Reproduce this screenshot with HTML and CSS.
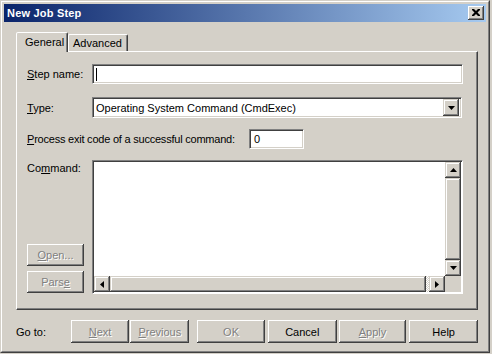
FILE: index.html
```html
<!DOCTYPE html>
<html lang="en">
<head>
  <meta charset="UTF-8">
  <title>New Job Step</title>
  <link rel="stylesheet" href="styles.css">
</head>
<body>
  <div class="window">
    <div class="frame">
      <div class="titlebar">
        <span class="title">New Job Step</span>
        <div class="close">
          <svg width="8" height="7" viewBox="0 0 8 7"><path d="M0 0h2l2 2 2-2h2v1l-2.5 2.5L8 6v1H6L4 5 2 7H0V6l2.5-2.5L0 1z" fill="#000"/></svg>
        </div>
      </div>

      <div class="content">
        <!-- Tabs -->
        <div class="tabs">
          <div class="tab active">General</div>
          <div class="tab">Advanced</div>
        </div>

        <div class="panel">
          <div class="row">
            <label class="label"><u>S</u>tep name:</label>
            <div class="field step-name"><span class="caret"></span></div>
          </div>

          <div class="row type-row">
            <label class="label"><u>T</u>ype:</label>
            <div class="field combo">
              <span class="combo-text">Operating System Command (CmdExec)</span>
              <div class="combo-btn">
                <svg width="7" height="4" viewBox="0 0 7 4"><path d="M0 0h7L3.5 4z" fill="#000"/></svg>
              </div>
            </div>
          </div>

          <div class="row exit-row">
            <label class="label wide"><u>P</u>rocess exit code of a successful command:</label>
            <div class="field exit-code">0</div>
          </div>

          <div class="command-row">
            <div class="command-side">
              <label class="label">Co<u>m</u>mand:</label>
              <div class="side-buttons">
                <button class="btn disabled"><u>O</u>pen...</button>
                <button class="btn disabled">Pars<u>e</u></button>
              </div>
            </div>

            <div class="command-box">
              <div class="command-text"></div>
              <div class="vscroll">
                <div class="sbtn">
                  <svg width="7" height="4" viewBox="0 0 7 4"><path d="M3.5 0L7 4H0z" fill="#000"/></svg>
                </div>
                <div class="vthumb"></div>
                <div class="track"></div>
                <div class="sbtn">
                  <svg width="7" height="4" viewBox="0 0 7 4"><path d="M0 0h7L3.5 4z" fill="#000"/></svg>
                </div>
              </div>
              <div class="hscroll">
                <div class="sbtn">
                  <svg width="4" height="7" viewBox="0 0 4 7"><path d="M4 0v7L0 3.5z" fill="#000"/></svg>
                </div>
                <div class="hthumb"></div>
                <div class="track"></div>
                <div class="sbtn">
                  <svg width="4" height="7" viewBox="0 0 4 7"><path d="M0 0v7L4 3.5z" fill="#000"/></svg>
                </div>
              </div>
              <div class="corner"></div>
            </div>
          </div>
        </div>

        <!-- Footer buttons -->
        <div class="footer">
          <span class="goto">Go to:</span>
          <button class="btn nav disabled"><u>N</u>ext</button>
          <button class="btn nav prev disabled"><u>P</u>revious</button>
          <button class="btn action ok disabled">OK</button>
          <button class="btn action cancel">Cancel</button>
          <button class="btn action apply disabled"><u>A</u>pply</button>
          <button class="btn action help">Help</button>
        </div>
      </div>
    </div>
  </div>
</body>
</html>
```

FILE: styles.css
```css
* {
  margin: 0;
  padding: 0;
  box-sizing: border-box;
}

body {
  width: 492px;
  height: 354px;
  overflow: hidden;
  background: #d4d0c8;
  font-family: 'Liberation Sans', Arial, sans-serif;
  font-size: 11px;
  color: #000;
}

u {
  text-decoration: underline;
  text-underline-offset: 1px;
}

.window {
  width: 490px;
  height: 353px;
  border: 1px solid;
  border-color: #d4d0c8 #404040 #404040 #d4d0c8;
}

.frame {
  height: 100%;
  border: 1px solid;
  border-color: #fff #808080 #808080 #fff;
  padding: 2px;
  display: flex;
  flex-direction: column;
}

.titlebar {
  height: 18px;
  background: linear-gradient(to right, #0a246a, #a6caf0);
  display: flex;
  align-items: center;
  justify-content: space-between;
  padding: 0 2px 0 3px;
}

.title {
  color: #fff;
  font-weight: bold;
  font-size: 11px;
  letter-spacing: 0.2px;
}

.close {
  width: 16px;
  height: 14px;
  background: #d4d0c8;
  box-shadow: inset -1px -1px #404040, inset 1px 1px #fff, inset -2px -2px #808080;
  display: flex;
  align-items: center;
  justify-content: center;
  padding-bottom: 1px;
}

.content {
  flex: 1;
  padding: 10px 8px 0 12px;
  display: flex;
  flex-direction: column;
}

.tabs {
  display: flex;
  align-items: flex-end;
  height: 19px;
  position: relative;
  z-index: 1;
}

.tab {
  height: 17px;
  padding: 0 5px 0 5px;
  border: 1px solid;
  border-bottom: none;
  border-color: #fff #404040 transparent #fff;
  border-radius: 2px 2px 0 0;
  box-shadow: inset -1px 0 #808080;
  display: flex;
  align-items: center;
}

.tab:not(.active) {
  width: 60px;
  padding-left: 4px;
}

.tab.active {
  height: 20px;
  width: 52px;
  margin-bottom: -1px;
  background: #d4d0c8;
  padding-left: 8px;
  padding-bottom: 1px;
}

.panel {
  height: 259px;
  border: 1px solid;
  border-color: #fff #404040 #404040 #fff;
  box-shadow: inset -1px -1px #808080;
  padding: 12px 0 0 10px;
}

.row {
  display: flex;
  align-items: center;
}

.label {
  width: 65px;
  flex-shrink: 0;
}

.label.wide {
  width: 222px;
  letter-spacing: -0.22px;
}

.field {
  background: #fff;
  border: 1px solid;
  border-color: #808080 #fff #fff #808080;
  box-shadow: inset 1px 1px #404040, inset -1px -1px #d4d0c8;
  display: flex;
  align-items: center;
}

.step-name {
  width: 371px;
  height: 20px;
  padding-left: 3px;
}

.caret {
  width: 1px;
  height: 13px;
  background: #000;
}

.type-row {
  margin-top: 13px;
}

.combo {
  width: 370px;
  height: 21px;
  padding: 0 2px 0 3px;
  justify-content: space-between;
}

.combo-btn {
  width: 16px;
  height: 17px;
  background: #d4d0c8;
  box-shadow: inset -1px -1px #404040, inset 1px 1px #d4d0c8, inset -2px -2px #808080, inset 2px 2px #fff;
  display: flex;
  align-items: center;
  justify-content: center;
}

.exit-row {
  margin-top: 11px;
}

.exit-code {
  width: 55px;
  height: 20px;
  padding-left: 4px;
}

.command-row {
  margin-top: 11px;
  display: flex;
  height: 134px;
}

.command-side {
  width: 65px;
  flex-shrink: 0;
  display: flex;
  flex-direction: column;
  justify-content: space-between;
  padding-top: 2px;
}

.side-buttons {
  display: flex;
  flex-direction: column;
  gap: 5px;
  width: 57px;
  padding-bottom: 1px;
}

.btn {
  font-family: inherit;
  font-size: 11px;
  color: #000;
  background: #d4d0c8;
  border: none;
  height: 22px;
  box-shadow: inset -1px -1px #404040, inset 1px 1px #fff, inset -2px -2px #808080;
}

.btn.disabled {
  color: #808080;
  text-shadow: 1px 1px 0 #fff;
}

.command-box {
  width: 371px;
  border: 1px solid;
  border-color: #808080 #fff #fff #808080;
  box-shadow: inset 1px 1px #404040;
  padding: 1px;
  display: grid;
  grid-template-columns: 1fr 16px;
  grid-template-rows: 1fr 16px;
  background: #fff;
}

.vscroll {
  display: flex;
  flex-direction: column;
  background: #d4d0c8;
}

.hscroll {
  display: flex;
  background: #d4d0c8;
}

.sbtn {
  width: 16px;
  height: 16px;
  flex-shrink: 0;
  background: #d4d0c8;
  box-shadow: inset -1px -1px #404040, inset 1px 1px #d4d0c8, inset -2px -2px #808080, inset 2px 2px #fff;
  display: flex;
  align-items: center;
  justify-content: center;
}

.vthumb,
.hthumb {
  background: #d4d0c8;
  box-shadow: inset -1px -1px #404040, inset 1px 1px #d4d0c8, inset -2px -2px #808080, inset 2px 2px #fff;
}

.vthumb {
  height: 82px;
}

.hthumb {
  width: 316px;
}

.track {
  flex: 1;
  background: repeating-conic-gradient(#fff 0 25%, #d4d0c8 0 50%) 0 0 / 2px 2px;
}

.corner {
  background: #d4d0c8;
}

.footer {
  display: flex;
  align-items: center;
  margin-top: 10px;
  height: 23px;
}

.goto {
  width: 55px;
}

.footer .btn {
  height: 23px;
}

.nav {
  width: 59px;
}

.prev {
  margin-left: 1px;
}

.ok {
  width: 68px;
  margin-left: 8px;
}

.cancel {
  width: 69px;
  margin-left: 3px;
}

.apply {
  width: 68px;
  margin-left: 2px;
}

.help {
  width: 69px;
  margin-left: 3px;
}
```
